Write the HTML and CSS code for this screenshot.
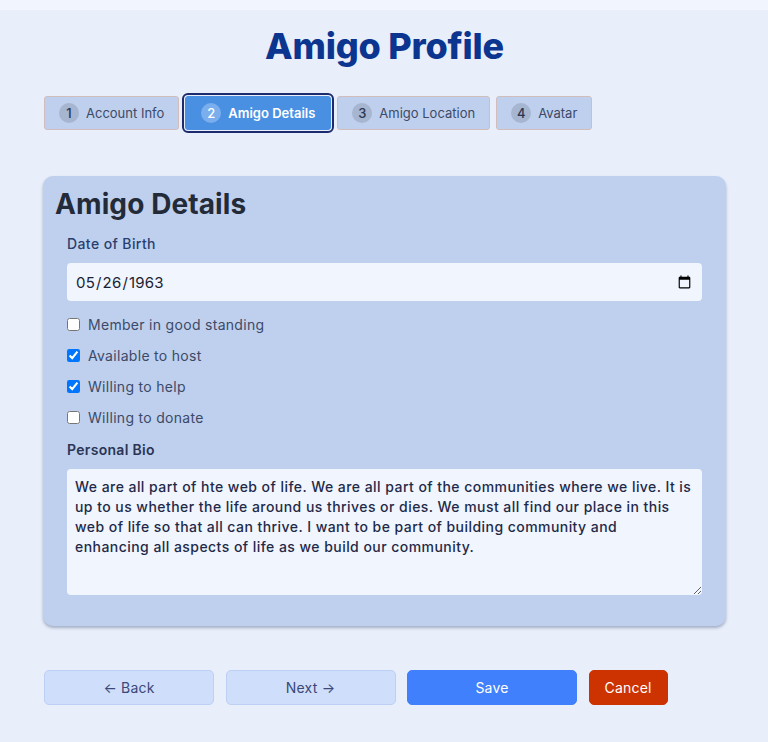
FILE: index.html
```html
<!DOCTYPE html>
<html lang="en">
<head>
<meta charset="utf-8">
<title>Amigo Profile</title>
<link rel="stylesheet" href="styles.css">
</head>
<body>
<div class="page">
  <h1 class="title">Amigo Profile</h1>
  <nav class="tabs">
    <button class="tab"><span class="num">1</span>Account Info</button>
    <button class="tab active"><span class="num">2</span>Amigo Details</button>
    <button class="tab"><span class="num">3</span>Amigo Location</button>
    <button class="tab"><span class="num">4</span>Avatar</button>
  </nav>
  <section class="card">
    <h2 class="card-title">Amigo Details</h2>
    <div class="fields">
      <label class="label" for="dob">Date of Birth</label>
      <input class="input" id="dob" type="date" value="1963-05-26">
      <div class="checks">
        <label class="check"><input type="checkbox">Member in good standing</label>
        <label class="check"><input type="checkbox" checked>Available to host</label>
        <label class="check"><input type="checkbox" checked>Willing to help</label>
        <label class="check"><input type="checkbox">Willing to donate</label>
      </div>
      <label class="label strong" for="bio">Personal Bio</label>
      <textarea class="textarea" id="bio">We are all part of hte web of life. We are all part of the communities where we live. It is up to us whether the life around us thrives or dies. We must all find our place in this web of life so that all can thrive. I want to be part of building community and enhancing all aspects of life as we build our community.</textarea>
    </div>
  </section>
  <div class="actions">
    <button class="btn btn-nav">← Back</button>
    <button class="btn btn-nav">Next →</button>
    <button class="btn btn-save">Save</button>
    <button class="btn btn-cancel">Cancel</button>
  </div>
</div>
</body>
</html>
```
FILE: styles.css
```css
* { box-sizing: border-box; }
html, body {
  margin: 0;
  padding: 0;
  background: #f1f5fd;
  font-family: Inter, "Noto Sans", sans-serif;
}
.page {
  margin-top: 10px;
  background: #e8eefa;
  min-height: 732px;
  padding: 16px 42px 30px 43px;
}
.title {
  margin: 0;
  text-align: center;
  font-size: 36px;
  line-height: 40px;
  font-weight: 800;
  color: #0c3590;
  letter-spacing: -0.2px;
}
.tabs {
  display: flex;
  gap: 6px;
  margin-top: 30px;
  padding-left: 1px;
}
.tab {
  display: flex;
  align-items: center;
  gap: 7px;
  height: 34px;
  padding: 0 14px;
  background: #bfd0ee;
  border: 1px solid #d2bdbd;
  border-radius: 3px;
  font-family: inherit;
  font-size: 13px;
  color: #3c4a68;
  cursor: pointer;
}
.num {
  display: inline-flex;
  align-items: center;
  justify-content: center;
  width: 20px;
  height: 20px;
  border-radius: 50%;
  background: #a6b5d0;
  color: #2c3650;
  font-size: 13px;
  font-weight: 500;
}
.tab.active {
  background: #4a90e2;
  color: #fff;
  font-weight: 600;
  border-color: #4a90e2;
  outline: 2px solid #1c2a6e;
  outline-offset: 1px;
  padding: 0 15px;
}
.tab.active .num {
  background: #7aaeed;
  color: #fff;
}
.card {
  margin-top: 46px;
  background: #bfd0ee;
  border-radius: 10px;
  padding: 12px 12px 31px;
  box-shadow: 0 2px 3px rgba(40, 60, 100, 0.35);
}
.card-title {
  margin: 0;
  font-size: 28px;
  line-height: 32px;
  font-weight: 700;
  color: #232a38;
  letter-spacing: 0.1px;
}
.fields {
  display: flex;
  flex-direction: column;
  padding: 14px 12px 0;
}
.label {
  font-size: 14px;
  line-height: 20px;
  font-weight: 500;
  color: #27406f;
  margin-bottom: 9px;
  letter-spacing: 0.4px;
}
.label.strong {
  font-weight: 600;
  color: #2a3554;
  letter-spacing: 0.3px;
}
.input {
  height: 38px;
  border: none;
  border-radius: 4px;
  background: #f0f5fe;
  padding: 0 8px;
  font-family: inherit;
  font-size: 15px;
  letter-spacing: 0.2px;
  color: #1b2233;
}
.checks {
  display: flex;
  flex-direction: column;
  gap: 11.33px;
  margin: 13px 0 12px;
}
.check {
  display: flex;
  align-items: center;
  gap: 8px;
  height: 20px;
  font-size: 14px;
  letter-spacing: 0.3px;
  color: #3c4a68;
}
.check input {
  margin: 0;
  width: 13px;
  height: 13px;
}
.textarea {
  height: 126px;
  border: none;
  border-radius: 4px;
  background: #f0f5fe;
  padding: 8px;
  font-family: inherit;
  font-size: 14px;
  line-height: 20px;
  font-weight: 500;
  letter-spacing: 0.45px;
  color: #1f2a48;
  resize: vertical;
}
.actions {
  display: flex;
  gap: 11.5px;
  margin-top: 44px;
  padding-left: 1px;
}
.btn {
  height: 35px;
  border-radius: 5px;
  font-family: inherit;
  font-size: 14px;
  letter-spacing: 0.2px;
  cursor: pointer;
}
.btn-nav {
  width: 170px;
  background: #cfdefa;
  border: 1px solid #bccff4;
  color: #3b4878;
}
.btn-save {
  width: 170px;
  background: #4180fc;
  border: 1px solid #4180fc;
  color: #fff;
}
.btn-cancel {
  padding: 0 15px;
  background: #cc3300;
  border: 1px solid #cc3300;
  color: #fff;
}
```
